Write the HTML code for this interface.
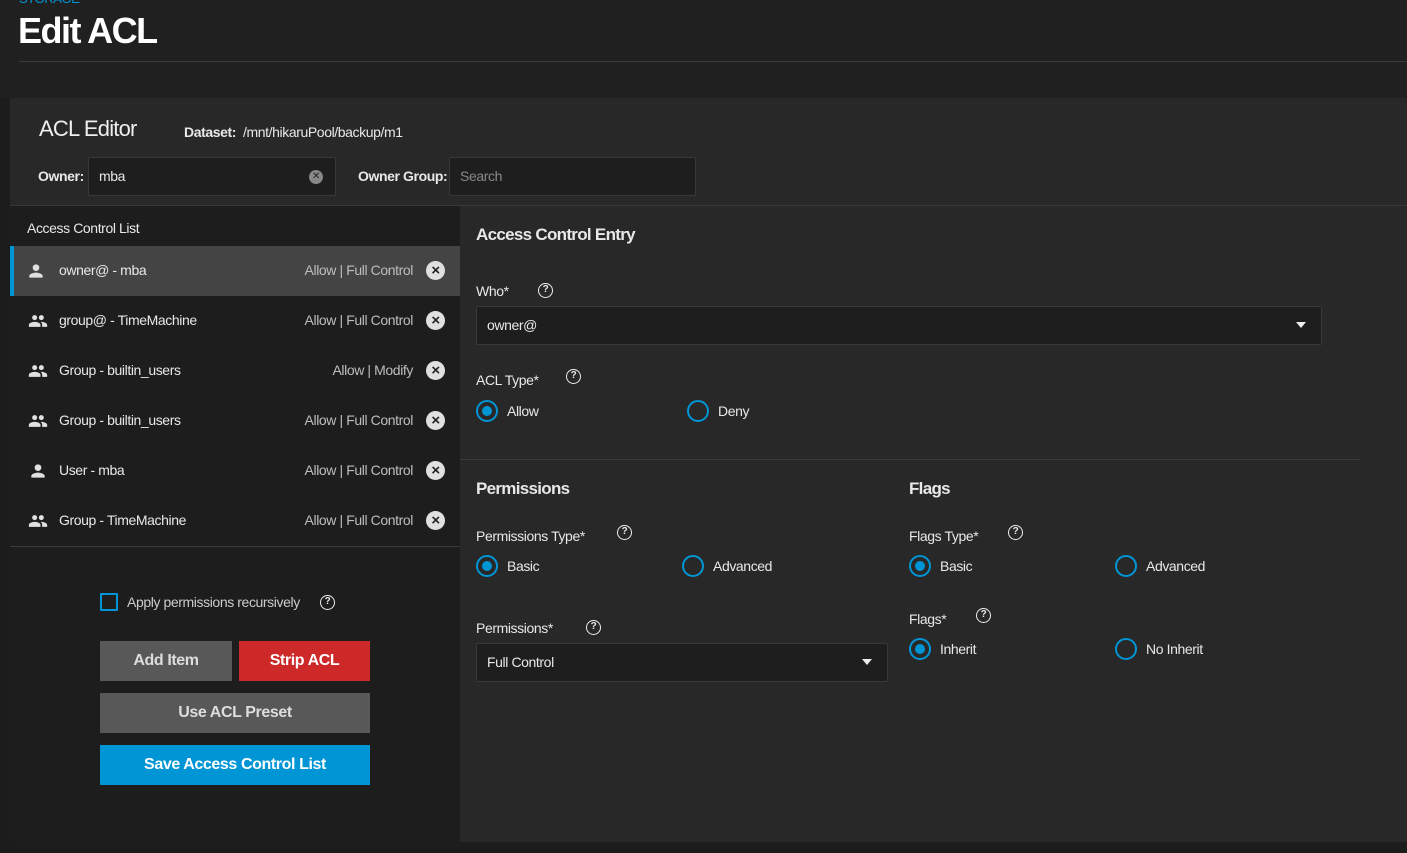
<!DOCTYPE html>
<html><head><style>
*{box-sizing:border-box;margin:0;padding:0}
body{width:1407px;height:853px;background:#1c1c1c;font-family:"Liberation Sans",sans-serif;color:#e8e8e8;position:relative;overflow:hidden;letter-spacing:-0.4px}
.a{position:absolute}
.top{left:0;top:0;width:1407px;height:98px;background:#202020}
.panel{left:10px;top:98px;width:1397px;height:744px;background:#282828}
.left{left:10px;top:206px;width:450px;height:636px;background:#1d1d1d}
.sel{left:10px;top:246px;width:450px;height:50px;background:#444;border-left:4px solid #0095d5}
.row{left:10px;width:450px;height:50px;font-size:14px}
.row .ic{position:absolute;left:16px;top:15px}
.row .n{position:absolute;left:49px;top:16px}
.row .p{position:absolute;right:47px;top:16px;color:#bdbdbd}
.row .x{position:absolute;right:15px;top:15px;width:19px;height:19px;border-radius:50%;background:#e0e0e0;color:#222;font-size:15px;line-height:19px;text-align:center;font-weight:bold}
.lbl{font-size:14px;color:#e8e8e8}
.q{display:inline-block;width:15px;height:15px;border:1.5px solid #eee;border-radius:50%;font-size:10px;line-height:12px;text-align:center;font-weight:bold}
.inp{background:#1e1e1e;border:1px solid #383838;border-radius:2px;font-size:14px}
.rad{width:22px;height:22px;border:2px solid #0095d5;border-radius:50%}
.rad.on::after{content:"";position:absolute;left:4px;top:4px;width:10px;height:10px;border-radius:50%;background:#0095d5}
.btn{font-size:16px;font-weight:bold;text-align:center;color:#fff;line-height:40px;height:40px}
</style></head><body>
<div class="a top"></div>
<div class="a" style="left:19px;top:-9px;font-size:13px;color:#0095d5">STORAGE</div>
<div class="a" style="left:18px;top:10px;font-size:36px;font-weight:bold;color:#fff;letter-spacing:-1.5px">Edit ACL</div>
<div class="a" style="left:19px;top:61px;width:1388px;height:1px;background:#3a3a3a"></div>
<div class="a panel"></div>
<div class="a" style="left:39px;top:116px;font-size:22px;color:#eee;letter-spacing:-0.8px">ACL Editor</div>
<div class="a" style="left:184px;top:124px;font-size:14px"><b>Dataset:</b>&nbsp; /mnt/hikaruPool/backup/m1</div>
<div class="a" style="left:38px;top:168px;font-size:14px;font-weight:bold">Owner:</div>
<div class="a inp" style="left:88px;top:157px;width:248px;height:39px;padding:10px"><span>mba</span><span style="position:absolute;right:12px;top:12px;width:14px;height:14px;border-radius:50%;background:#888;color:#222;font-size:10px;line-height:14px;text-align:center">✕</span></div>
<div class="a" style="left:358px;top:168px;font-size:14px;font-weight:bold">Owner Group:</div>
<div class="a inp" style="left:449px;top:157px;width:247px;height:39px;padding:10px;color:#888">Search</div>
<div class="a" style="left:10px;top:205px;width:1397px;height:1px;background:#383838"></div>
<div class="a left"></div>
<div class="a" style="left:27px;top:220px;font-size:14px">Access Control List</div>
<div class="a sel"></div>
<svg width="0" height="0" style="position:absolute"><defs>
<symbol id="u" viewBox="0 0 24 24"><path fill="#e0e0e0" d="M12 12a4 4 0 1 0 0-8 4 4 0 0 0 0 8zm0 2c-2.7 0-8 1.3-8 4v2h16v-2c0-2.7-5.3-4-8-4z"/></symbol>
<symbol id="g" viewBox="0 0 24 24"><path fill="#e0e0e0" d="M16 11a3 3 0 1 0 0-6 3 3 0 0 0 0 6zm-8 0a3 3 0 1 0 0-6 3 3 0 0 0 0 6zm0 2c-2.3 0-7 1.2-7 3.5V19h14v-2.5C15 14.2 10.3 13 8 13zm8 0c-.3 0-.6 0-1 .1 1.2.8 2 2 2 3.4V19h6v-2.5c0-2.3-4.7-3.5-7-3.5z"/></symbol></defs></svg>
<div class="a row" style="top:246px"><svg class="ic" width="24" height="20" style="left:14px"><use href="#u"/></svg><span class="n">owner@ - mba</span><span class="p">Allow | Full Control</span><span class="x">×</span></div>
<div class="a row" style="top:296px"><svg class="ic" width="24" height="20"><use href="#g"/></svg><span class="n">group@ - TimeMachine</span><span class="p">Allow | Full Control</span><span class="x">×</span></div>
<div class="a row" style="top:346px"><svg class="ic" width="24" height="20"><use href="#g"/></svg><span class="n">Group - builtin_users</span><span class="p">Allow | Modify</span><span class="x">×</span></div>
<div class="a row" style="top:396px"><svg class="ic" width="24" height="20"><use href="#g"/></svg><span class="n">Group - builtin_users</span><span class="p">Allow | Full Control</span><span class="x">×</span></div>
<div class="a row" style="top:446px"><svg class="ic" width="24" height="20"><use href="#u"/></svg><span class="n">User - mba</span><span class="p">Allow | Full Control</span><span class="x">×</span></div>
<div class="a row" style="top:496px"><svg class="ic" width="24" height="20"><use href="#g"/></svg><span class="n">Group - TimeMachine</span><span class="p">Allow | Full Control</span><span class="x">×</span></div>
<div class="a" style="left:10px;top:546px;width:450px;height:1px;background:#3a3a3a"></div>
<div class="a" style="left:100px;top:593px;width:18px;height:18px;border:2px solid #0095d5;border-radius:1px"></div>
<div class="a" style="left:127px;top:594px;font-size:14px;color:#ccc">Apply permissions recursively</div>
<span class="a q" style="left:320px;top:595px">?</span>
<div class="a btn" style="left:100px;top:641px;width:132px;background:#585858;color:#ddd">Add Item</div>
<div class="a btn" style="left:239px;top:641px;width:131px;background:#ce2929">Strip ACL</div>
<div class="a btn" style="left:100px;top:693px;width:270px;background:#585858;color:#ddd">Use ACL Preset</div>
<div class="a btn" style="left:100px;top:745px;width:270px;background:#0095d5">Save Access Control List</div>

<div class="a" style="left:476px;top:225px;font-size:17px;font-weight:bold;letter-spacing:-0.7px">Access Control Entry</div>
<div class="a lbl" style="left:476px;top:283px">Who*</div><span class="a q" style="left:538px;top:283px">?</span>
<div class="a inp" style="left:476px;top:306px;width:846px;height:39px;padding:10px">owner@<span style="position:absolute;right:15px;top:15px;border:5px solid transparent;border-top:6px solid #eee"></span></div>
<div class="a lbl" style="left:476px;top:372px">ACL Type*</div><span class="a q" style="left:566px;top:369px">?</span>
<div class="a rad on" style="left:476px;top:400px"></div><div class="a lbl" style="left:507px;top:403px">Allow</div>
<div class="a rad" style="left:687px;top:400px"></div><div class="a lbl" style="left:718px;top:403px">Deny</div>
<div class="a" style="left:460px;top:459px;width:900px;height:1px;background:#3a3a3a"></div>
<div class="a" style="left:476px;top:479px;font-size:17px;font-weight:bold;letter-spacing:-0.7px">Permissions</div>
<div class="a" style="left:909px;top:479px;font-size:17px;font-weight:bold;letter-spacing:-0.7px">Flags</div>
<div class="a lbl" style="left:476px;top:528px">Permissions Type*</div><span class="a q" style="left:617px;top:525px">?</span>
<div class="a rad on" style="left:476px;top:555px"></div><div class="a lbl" style="left:507px;top:558px">Basic</div>
<div class="a rad" style="left:682px;top:555px"></div><div class="a lbl" style="left:713px;top:558px">Advanced</div>
<div class="a lbl" style="left:476px;top:620px">Permissions*</div><span class="a q" style="left:586px;top:620px">?</span>
<div class="a inp" style="left:476px;top:643px;width:412px;height:39px;padding:10px">Full Control<span style="position:absolute;right:15px;top:15px;border:5px solid transparent;border-top:6px solid #eee"></span></div>
<div class="a lbl" style="left:909px;top:528px">Flags Type*</div><span class="a q" style="left:1008px;top:525px">?</span>
<div class="a rad on" style="left:909px;top:555px"></div><div class="a lbl" style="left:940px;top:558px">Basic</div>
<div class="a rad" style="left:1115px;top:555px"></div><div class="a lbl" style="left:1146px;top:558px">Advanced</div>
<div class="a lbl" style="left:909px;top:611px">Flags*</div><span class="a q" style="left:976px;top:608px">?</span>
<div class="a rad on" style="left:909px;top:638px"></div><div class="a lbl" style="left:940px;top:641px">Inherit</div>
<div class="a rad" style="left:1115px;top:638px"></div><div class="a lbl" style="left:1146px;top:641px">No Inherit</div>
</body></html>
